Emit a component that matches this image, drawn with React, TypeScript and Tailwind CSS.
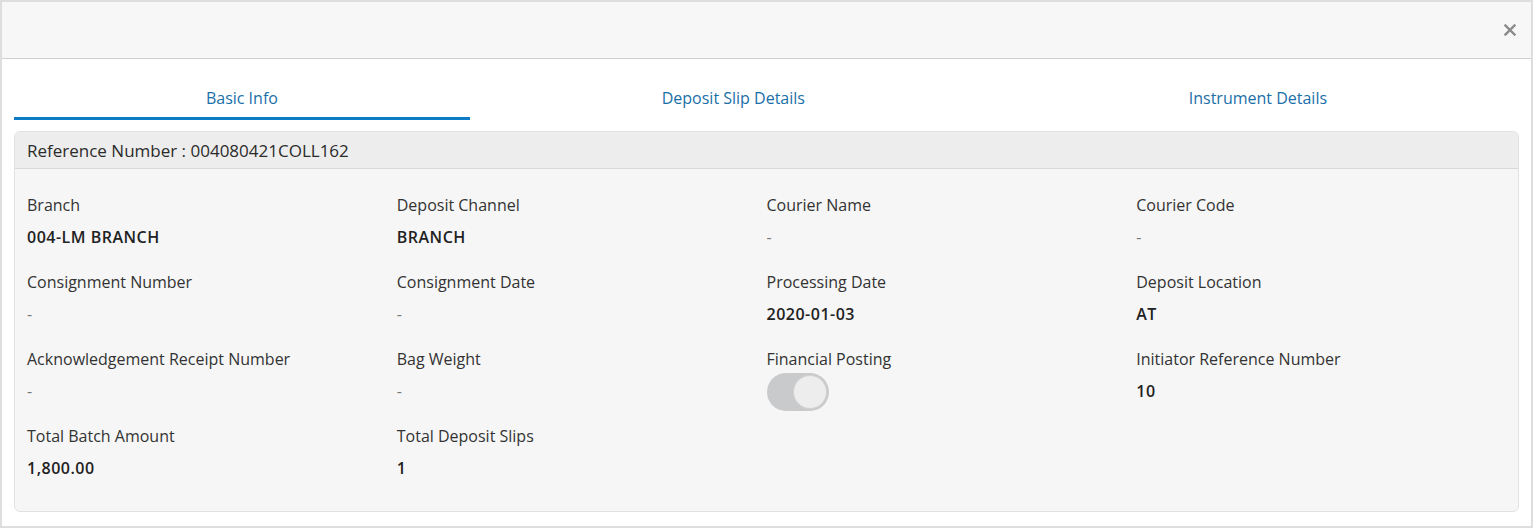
import React, { useState } from 'react';

const fields: { label: string; value?: string; toggle?: boolean }[] = [
  { label: 'Branch', value: '004-LM BRANCH' },
  { label: 'Deposit Channel', value: 'BRANCH' },
  { label: 'Courier Name', value: '-' },
  { label: 'Courier Code', value: '-' },
  { label: 'Consignment Number', value: '-' },
  { label: 'Consignment Date', value: '-' },
  { label: 'Processing Date', value: '2020-01-03' },
  { label: 'Deposit Location', value: 'AT' },
  { label: 'Acknowledgement Receipt Number', value: '-' },
  { label: 'Bag Weight', value: '-' },
  { label: 'Financial Posting', toggle: true },
  { label: 'Initiator Reference Number', value: '10' },
  { label: 'Total Batch Amount', value: '1,800.00' },
  { label: 'Total Deposit Slips', value: '1' },
];

const tabs = ['Basic Info', 'Deposit Slip Details', 'Instrument Details'];

const App = () => {
  const [activeTab, setActiveTab] = useState(0);

  return (
    <div
      className="w-[1533px] h-[528px] border-2 border-[#dedede] bg-white flex flex-col text-[#2b2b2b]"
      style={{ fontFamily: '"Open Sans", "Noto Sans", Arial, sans-serif' }}
    >
      {/* Modal header */}
      <div className="h-[57px] shrink-0 bg-[#f7f7f7] border-b border-[#d0d0d0] flex items-center justify-end pr-[15px]">
        <button className="text-[#8a8a8a]">
          <svg width="12" height="12" viewBox="0 0 12 12">
            <path d="M1.5 1.5 L10.5 10.5 M10.5 1.5 L1.5 10.5" stroke="currentColor" strokeWidth="2.4" strokeLinecap="square" />
          </svg>
        </button>
      </div>

      <div className="px-[12px] flex flex-col flex-1">
        {/* Tabs */}
        <div className="flex h-[61px]">
          {tabs.map((t, i) => (
            <button
              key={t}
              onClick={() => setActiveTab(i)}
              className={
                'flex-auto flex items-center justify-center pt-[19px] text-[16px] text-[#1a6fa8] border-b-[3px] ' +
                (activeTab === i ? 'border-[#0d7cc7]' : 'border-transparent')
              }
            >
              {t}
            </button>
          ))}
        </div>

        {/* Card */}
        <div className="mt-[11px] h-[381px] rounded-[6px] border border-[#e2e2e2] bg-[#f6f6f6] overflow-hidden">
          <div className="h-[37px] bg-[#ededed] border-b border-[#d9d9d9] flex items-center pt-[1px] px-[12px] text-[17px] text-[#2b2b2b]">
            Reference Number : 004080421COLL162
          </div>
          <div className="grid grid-cols-4 px-[12px] pt-[24px] gap-y-[19px]">
            {fields.map((f) => (
              <div key={f.label} className="h-[58px] flex flex-col">
                <div className="text-[16px] leading-[24px] text-[#333]">{f.label}</div>
                {f.toggle ? (
                  <div className="mt-[2px] w-[62px] h-[38px] rounded-full bg-[#c9cacc] flex items-center justify-end p-[2px]">
                    <div className="w-[34px] h-[34px] rounded-full bg-[#ededed] border border-[#d2d2d2]" />
                  </div>
                ) : (
                  <div
                    className={
                      'mt-[8px] text-[16px] leading-[24px] ' +
                      (f.value === '-' ? 'text-[#777] font-normal' : 'text-[#222] font-semibold tracking-[0.5px]')
                    }
                  >
                    {f.value}
                  </div>
                )}
              </div>
            ))}
          </div>
        </div>
      </div>
    </div>
  );
};

export default App;
